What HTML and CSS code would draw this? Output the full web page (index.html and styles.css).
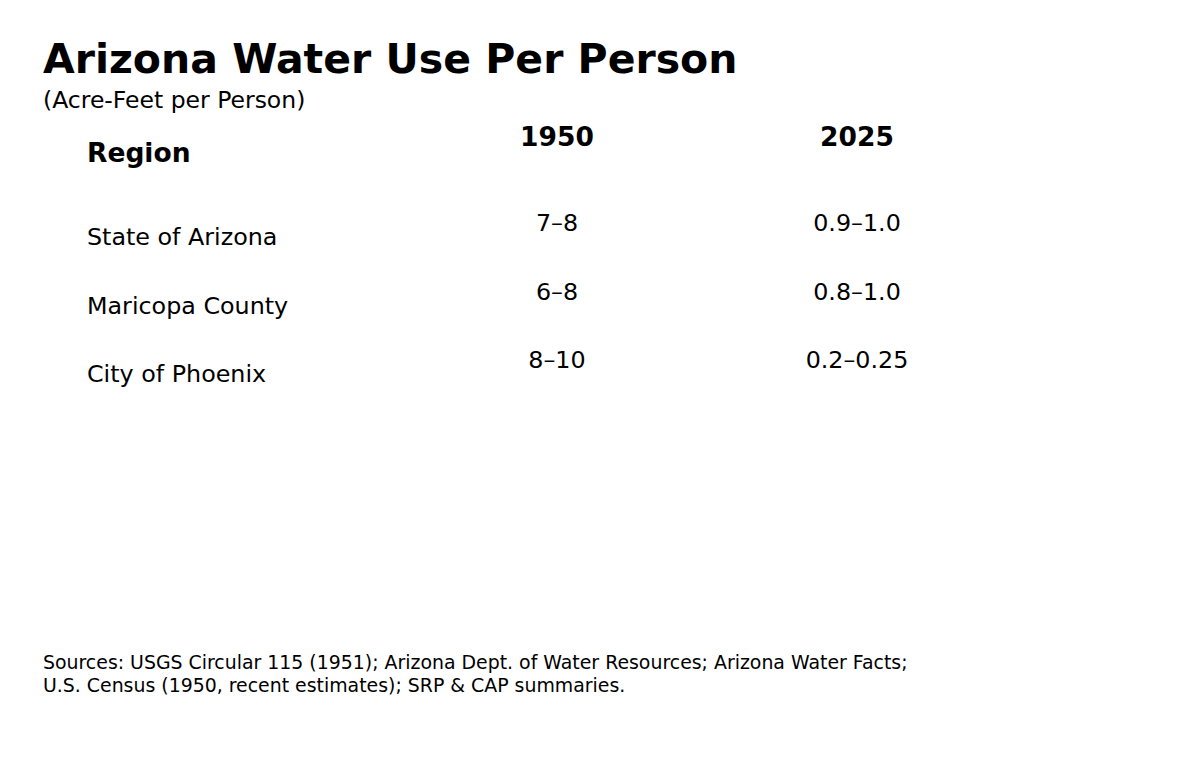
FILE: index.html
```html
<!DOCTYPE html>
<html lang="en">
<head>
<meta charset="utf-8">
<title>Arizona Water Use Per Person</title>
<link rel="stylesheet" href="styles.css">
</head>
<body>
<main class="page">
  <h1 class="title">Arizona Water Use Per Person</h1>
  <p class="subtitle">(Acre-Feet per Person)</p>
  <div class="table">
    <div class="row head">
      <div class="label">Region</div>
      <div class="val">1950</div>
      <div class="val">2025</div>
    </div>
    <div class="row">
      <div class="label">State of Arizona</div>
      <div class="val">7–8</div>
      <div class="val">0.9–1.0</div>
    </div>
    <div class="row">
      <div class="label">Maricopa County</div>
      <div class="val">6–8</div>
      <div class="val">0.8–1.0</div>
    </div>
    <div class="row">
      <div class="label">City of Phoenix</div>
      <div class="val">8–10</div>
      <div class="val">0.2–0.25</div>
    </div>
  </div>
  <p class="sources">Sources: USGS Circular 115 (1951); Arizona Dept. of Water Resources; Arizona Water Facts;<br>U.S. Census (1950, recent estimates); SRP &amp; CAP summaries.</p>
</main>
</body>
</html>
```

FILE: styles.css
```css
html, body {
  margin: 0;
  padding: 0;
  background: #ffffff;
}
body {
  font-family: "DejaVu Sans", "Liberation Sans", sans-serif;
  color: #000000;
}
.page {
  width: 1200px;
  height: 772px;
  box-sizing: border-box;
  padding: 39px 43px 0 43px;
  display: flex;
  flex-direction: column;
}
.title {
  margin: 0;
  font-size: 41px;
  line-height: 41px;
  font-weight: bold;
}
.subtitle {
  margin: 8px 0 0 0;
  font-size: 23.5px;
  line-height: 24px;
}
.table {
  margin: 11px 0 0 44px;
  display: flex;
  flex-direction: column;
}
.row {
  display: grid;
  grid-template-columns: 340px 260px 340px;
  align-items: start;
  height: 68.5px;
  font-size: 23.8px;
  line-height: 24px;
}
.row.head {
  height: 88px;
  font-size: 26.5px;
  line-height: 27px;
  font-weight: bold;
}
.label {
  padding-top: 14px;
}
.head .label {
  padding-top: 16px;
}
.val {
  text-align: center;
}
.sources {
  margin: auto 0 75px 0;
  font-size: 18.9px;
  line-height: 23px;
}
```
